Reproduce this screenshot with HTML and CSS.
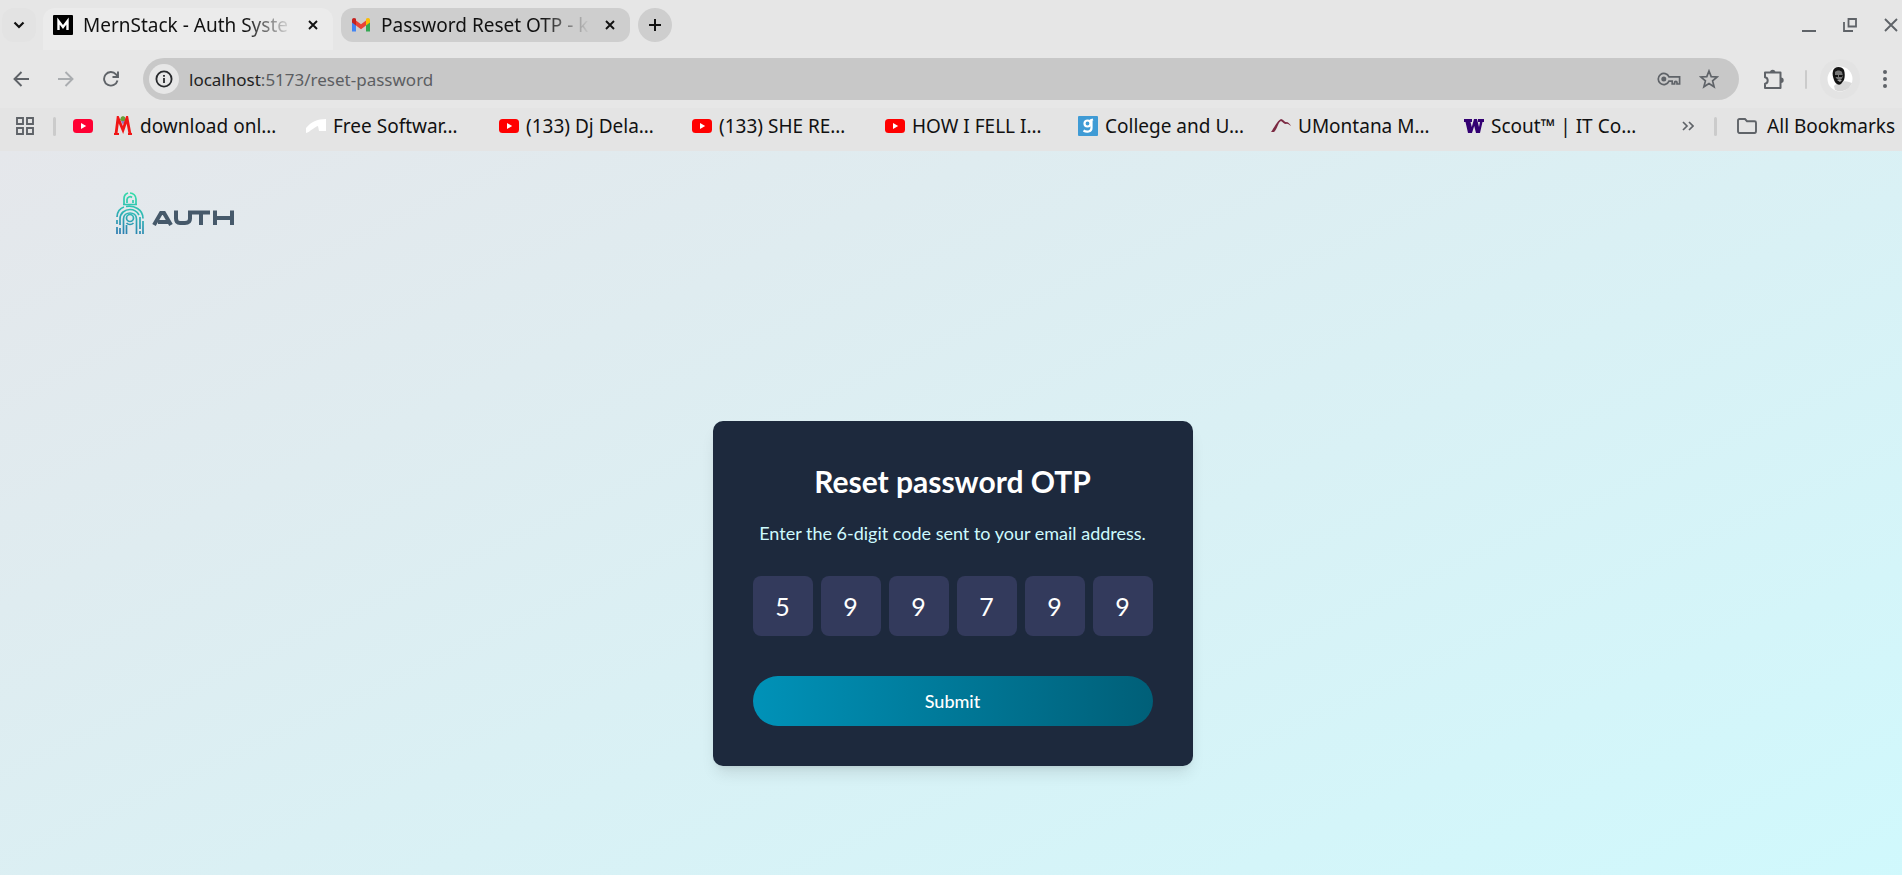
FILE: index.html
```html
<!DOCTYPE html>
<html lang="en">
<head>
<meta charset="utf-8">
<title>MernStack - Auth System</title>
<link rel="stylesheet" href="styles.css">
</head>
<body>
<header class="browser">
  <div class="tabstrip">
    <button class="tab-search" aria-label="Search tabs"><svg width="12" height="8" viewBox="0 0 12 8"><path d="M1.500 1.500 6 6l4.500-4.500" fill="none" stroke="#111" stroke-width="2.200"/></svg></button>
    <div class="tab tab-active">
      <svg width="20" height="20" viewBox="0 0 20 20"><rect width="20" height="20" rx="1" fill="#000"/><path d="M5.500 15V6l4.500 6 4.500-6v9" fill="none" stroke="#fff" stroke-width="2.400"/></svg>
      <span class="tab-title">MernStack - Auth Syste</span>
      <button class="tab-close" aria-label="Close tab"><svg width="10" height="10" viewBox="0 0 10 10"><path d="m1 1 8 8M9 1 1 9" stroke="#111" stroke-width="1.900"/></svg></button>
    </div>
    <div class="tab tab-idle">
      <svg width="20" height="20" viewBox="0 0 20 20"><path d="M1 5v11.500h4V8z" fill="#4285f4"/><path d="M19 5v11.500h-4V8z" fill="#34a853"/><path d="M15 5.500v5l4-3V5c0-2-2.200-2.600-4-1.200z" fill="#fbbc04"/><path d="M5 5.500v5l5 3.800 5-3.800v-5l-5 3.800z" fill="#ea4335"/><path d="M1 5c0-2 2.200-2.600 4-1.200v6.700l-4-3z" fill="#c5221f"/></svg>
      <span class="tab-title">Password Reset OTP - k</span>
      <button class="tab-close" aria-label="Close tab"><svg width="10" height="10" viewBox="0 0 10 10"><path d="m1 1 8 8M9 1 1 9" stroke="#111" stroke-width="1.900"/></svg></button>
    </div>
    <button class="new-tab" aria-label="New tab"><svg width="14" height="14" viewBox="0 0 14 14"><path d="M7 1v12M1 7h12" stroke="#111" stroke-width="2"/></svg></button>
    <div class="window-buttons">
      <button aria-label="Minimize"><svg width="14" height="14" viewBox="0 0 14 14"><path d="M0 13h14" stroke="#5f6368" stroke-width="2"/></svg></button>
      <button aria-label="Restore"><svg width="14" height="14" viewBox="0 0 14 14"><path d="M5.500 1H13v7.500H5.500zM1 4v9h9" fill="none" stroke="#5f6368" stroke-width="1.800"/></svg></button>
      <button aria-label="Close window"><svg width="14" height="14" viewBox="0 0 14 14"><path d="m1 1 12 12M13 1 1 13" stroke="#5f6368" stroke-width="1.900"/></svg></button>
    </div>
  </div>

  <div class="toolbar">
    <div class="nav">
      <button aria-label="Back"><svg width="16" height="16" viewBox="0 0 16 16"><path d="M16 8H1.500M8.500 1l-7 7 7 7" fill="none" stroke="#5f6368" stroke-width="1.900"/></svg></button>
      <button aria-label="Forward"><svg width="16" height="16" viewBox="0 0 16 16"><path d="M0 8h14.500M7.500 1l7 7-7 7" fill="none" stroke="#aaadb0" stroke-width="1.900"/></svg></button>
      <button aria-label="Reload"><svg width="16" height="16" viewBox="0 0 16 16"><path d="M14.500 9.500A6.800 6.800 0 1 1 13 3.300L14.500 5" fill="none" stroke="#5f6368" stroke-width="1.900"/><path d="M15 .5V6H9.500" fill="none" stroke="#5f6368" stroke-width="1.900"/></svg></button>
    </div>
    <div class="omnibox">
      <button class="site-info" aria-label="View site information"><svg width="18" height="18" viewBox="0 0 18 18"><circle cx="9" cy="9" r="7.600" fill="none" stroke="#27292c" stroke-width="1.800"/><path d="M9 8v5M9 5v1.800" stroke="#27292c" stroke-width="1.800"/></svg></button>
      <div class="url"><span class="host">localhost</span>:5173/reset-password</div>
      <button aria-label="Manage passwords"><svg width="24" height="14" viewBox="0 0 24 14"><path d="M12 4.800A5.600 5.600 0 1 0 12 9.200h3.200V12h2.400v-1.500c0-1.400 2.400-1.400 2.400 0V12h2.600V4.800z" fill="none" stroke="#5f6368" stroke-width="1.700"/><circle cx="6.800" cy="7" r="2.500" fill="#5f6368"/></svg></button>
      <button aria-label="Bookmark this tab"><svg width="20" height="20" viewBox="0 0 20 20"><path d="m10 2 2.200 5.600 6 .4-4.600 3.900 1.500 5.900L10 14.500l-5.100 3.300 1.500-5.900L1.800 8l6-.4z" fill="none" stroke="#5f6368" stroke-width="1.700"/></svg></button>
    </div>
    <div class="tools">
      <button aria-label="Extensions"><svg width="21" height="21" viewBox="0 0 21 21"><path d="M2 3.500h15.500V19H2v-4.200c3.600-.6 3.600-6 0-6.600z" fill="none" stroke="#5f6368" stroke-width="2" stroke-linejoin="round"/><path d="M7 3.500a2.700 2.700 0 0 1 5.400 0zM18 8.500a2.700 2.700 0 0 1 0 5.400z" fill="#5f6368"/></svg></button>
      <span class="rule rule-thin"></span>
      <button class="profile" aria-label="Profile"><svg width="26" height="26" viewBox="0 0 26 26"><circle cx="13" cy="13" r="12.500" fill="#fff"/><path d="M7 20c3-3 9-6 15-4l3 1a12.500 12.500 0 0 1-17 7z" fill="#d9d9d9"/><path d="M6 5c1-5 9-5 11-1 1 3 1 7 0 10l-3 4c-3 2-6-1-7-4S5 8 6 5z" fill="#151515"/><path d="M8 6c2-2 5-2 7 0l1 4c-1 3-2 4-3 4-3 0-4-2-5-4z" fill="#777"/><path d="M7 9h4v2H8zM12 9h4l-1 2h-3z" fill="#111"/><path d="M10 14h5l-2 2z" fill="#aaa"/></svg></button>
      <button aria-label="Menu"><svg width="4" height="18" viewBox="0 0 4 18"><g fill="#5f6368"><circle cx="2" cy="2" r="2"/><circle cx="2" cy="9" r="2"/><circle cx="2" cy="16" r="2"/></g></svg></button>
    </div>
  </div>

  <nav class="bookmarks" aria-label="Bookmarks">
    <button class="apps" aria-label="Apps"><svg width="18" height="18" viewBox="0 0 18 18"><path d="M1 1h6v6H1zM11 1h6v6h-6zM1 11h6v6H1zM11 11h6v6h-6z" fill="none" stroke="#5f6368" stroke-width="1.900"/></svg></button>
    <span class="rule"></span>
    <a class="bookmark bookmark-icon" href="#" aria-label="YouTube"><svg width="20" height="20" viewBox="0 0 20 20"><rect y="3" width="20" height="14" rx="3.500" fill="#f03"/><path d="M8 7v6l5.200-3z" fill="#fff"/></svg></a>
    <a class="bookmark" href="#"><svg width="20" height="20" viewBox="0 0 20 20"><path d="m8 1 2-1 2 1 1 3-3 2-3-2z" fill="#689f38"/><path d="M8 5h4l-2 4z" fill="#8e7cc3"/><path d="M3 18 5 2l5 12L14 2l3 16" fill="none" stroke="#f01616" stroke-width="2.800"/><path d="M1 18h5M15 18h4" stroke="#f01616" stroke-width="2"/></svg><span>download onl…</span></a>
    <a class="bookmark" href="#"><svg width="20" height="20" viewBox="0 0 20 20"><path d="M0 12C5 6 11 3 20 3v12h-7l-1-5C8 11 4 16 0 17z" fill="#fff"/></svg><span>Free Softwar…</span></a>
    <a class="bookmark" href="#"><svg width="20" height="20" viewBox="0 0 20 20"><rect y="3" width="20" height="14" rx="3.500" fill="red"/><path d="M8 7v6l5.200-3z" fill="#fff"/></svg><span>(133) Dj Dela…</span></a>
    <a class="bookmark" href="#"><svg width="20" height="20" viewBox="0 0 20 20"><rect y="3" width="20" height="14" rx="3.500" fill="red"/><path d="M8 7v6l5.200-3z" fill="#fff"/></svg><span>(133) SHE RE…</span></a>
    <a class="bookmark" href="#"><svg width="20" height="20" viewBox="0 0 20 20"><rect y="3" width="20" height="14" rx="3.500" fill="red"/><path d="M8 7v6l5.200-3z" fill="#fff"/></svg><span>HOW I FELL I…</span></a>
    <a class="bookmark" href="#"><svg width="20" height="20" viewBox="0 0 20 20"><rect width="20" height="20" rx="1" fill="#3f9bd5"/><circle cx="9.500" cy="7.500" r="3" fill="none" stroke="#fff" stroke-width="2.200"/><path d="M13.500 3v9c0 4-5 4.500-8 2.500M12 4.500l3-1" fill="none" stroke="#fff" stroke-width="2.200"/></svg><span>College and U…</span></a>
    <a class="bookmark" href="#"><svg width="20" height="20" viewBox="0 0 20 20"><path d="M0 16C3 12 6 5 10 3c2 0 4 4 6 3 2 1 3 2 4 4-2-1-3-3-5-2-2 0-3-2-5-3-3 1-4 9-7 11z" fill="#7b2942"/></svg><span>UMontana M…</span></a>
    <a class="bookmark" href="#"><svg width="20" height="20" viewBox="0 0 20 20"><path d="M0 3h8v3H6.500l1.300 5L10 3h3l2 8 1-5h-2V3h6v3h-1.500L16 17h-4l-1.800-7L8 17H4L1.500 6H0z" fill="#330072"/></svg><span>Scout™ | IT Co…</span></a>
    <div class="bookmarks-end">
      <button aria-label="More bookmarks"><svg width="12" height="10" viewBox="0 0 12 10"><path d="m1 1 4 4-4 4M7 1l4 4-4 4" fill="none" stroke="#5f6368" stroke-width="1.700"/></svg></button>
      <span class="rule"></span>
      <a class="all-bookmarks" href="#"><svg width="20" height="16" viewBox="0 0 20 16"><path d="M1 13V2.500Q1 1 2.500 1H8l2 2.200h7.500Q19 3.200 19 4.700V13q0 2-1.500 2h-15Q1 15 1 13z" fill="none" stroke="#5f6368" stroke-width="1.900"/></svg><span>All Bookmarks</span></a>
    </div>
  </nav>
</header>

<main class="page">
  <a class="logo" href="#" aria-label="Auth home">
    <svg width="120" height="44" viewBox="0 0 120 44">
      <defs><linearGradient id="mark" gradientUnits="userSpaceOnUse" x1="20" y1="0" x2="8" y2="44"><stop offset="0" stop-color="#35e0a8"/><stop offset=".5" stop-color="#2fb5b5"/><stop offset="1" stop-color="#2a78b0"/></linearGradient></defs>
      <g fill="none" stroke="url(#mark)" stroke-width="1.700">
        <path d="M8 12V7a6 6 0 0 1 4-6M14 1a6 6 0 0 1 6 6v5M11 11V7.500a3 3 0 0 1 5-2M17 8v3M7 12.500h14"/>
        <path d="M1 25c0-5 3-9 7-10M10 14.500c8-1.500 17 3 17 12M1 28v4M1 35v7M27 29v13"/>
        <path d="M4 33V27c0-6 5-9.500 10-9.500 4 0 7 2 9 5.500M24 25v12M4 36v6M24 39v3"/>
        <path d="M7.500 42V27c0-8 13-8 13 0v15M10.500 42V33"/>
        <circle cx="14" cy="26" r="3.500"/><path d="M10.500 31c2 2 5 2 7 0"/>
      </g>
      <g fill="none" stroke="#46596a" stroke-width="4">
        <path d="m38 33 7-12h3l7 12M42 30h10"/>
        <path d="M60 18.500v8q0 4.500 4 4.500h5q5 0 5-4.500v-8"/>
        <path d="M76 20.500h18M85 20v13M99 18.500V33M116 18.500V33M99 26h17"/>
      </g>
    </svg>
  </a>
  <form class="card">
    <h1>Reset password OTP</h1>
    <p>Enter the 6-digit code sent to your email address.</p>
    <div class="digits">
      <input aria-label="Digit 1" maxlength="1" value="5">
      <input aria-label="Digit 2" maxlength="1" value="9">
      <input aria-label="Digit 3" maxlength="1" value="9">
      <input aria-label="Digit 4" maxlength="1" value="7">
      <input aria-label="Digit 5" maxlength="1" value="9">
      <input aria-label="Digit 6" maxlength="1" value="9">
    </div>
    <button class="submit" type="button">Submit</button>
  </form>
</main>
</body>
</html>
```
FILE: styles.css
```css
* { box-sizing: border-box; }
body { margin: 0; min-height: 100vh; display: flex; flex-direction: column; font-family: "Noto Sans", sans-serif; color: #111; overflow: hidden; }
button { border: 0; padding: 0; background: none; font: inherit; color: inherit; display: flex; align-items: center; justify-content: center; flex: none; }
a { color: inherit; text-decoration: none; }
svg { display: block; flex: none; }

.browser { background: #e4e4e4; font-size: 19px; }
.tabstrip { display: flex; align-items: center; height: 50px; padding: 0 4px 0 2px; background: #e6e6e6; }
.tab-search { width: 34px; height: 34px; border-radius: 12px; background: #e3e3e3; }
.tab { display: flex; align-items: center; height: 34px; width: 289px; padding: 0 10px; gap: 10px; border-radius: 12px; }
.tab-active { margin-left: 7px; height: 42px; margin-top: 8px; padding-bottom: 8px; width: 290px; background: #ebebeb; border-radius: 12px 12px 0 0; }
.tab-idle { margin-left: 8px; background: #cecece; }
.tab-title { flex: 1; min-width: 0; white-space: nowrap; -webkit-mask-image: linear-gradient(to right, #000 calc(100% - 48px), transparent); mask-image: linear-gradient(to right, #000 calc(100% - 48px), transparent); }
.tab-close { width: 20px; height: 20px; }
.new-tab { width: 34px; height: 34px; margin-left: 8px; border-radius: 50%; background: #cecece; }
.window-buttons { display: flex; gap: 27px; margin-left: auto; }

.toolbar { display: flex; align-items: center; height: 58px; padding: 0 15px 0 13px; background: #e7e7e7; }
.nav { display: flex; gap: 29px; width: 130px; }
.omnibox { flex: 1; display: flex; align-items: center; height: 42px; padding: 0 20px 0 6px; gap: 18px; border-radius: 21px; background: #c8c8c8; }
.site-info { width: 30px; height: 30px; border-radius: 50%; background: #e7e7e7; }
.url { flex: 1; margin-left: -8px; font-size: 17px; color: #5c5e62; }
.host { color: #222; }
.tools { display: flex; align-items: center; margin-left: 24px; gap: 21px; }
.profile { width: 40px; height: 40px; margin: 0 2px 0 -8px; border-radius: 50%; background: #e3e3e3; }

.rule { width: 3px; height: 19px; border-radius: 2px; background: #cbcbcb; }
.rule-thin { width: 2px; }
.bookmarks { display: flex; align-items: center; height: 43px; padding: 0 7px 7px 16px; white-space: nowrap; }
.apps { margin-right: 19px; }
.bookmark { display: flex; align-items: center; gap: 7px; width: 193px; }
.bookmark-icon { width: 40px; margin-left: 17px; }
.bookmarks-end { display: flex; align-items: center; gap: 20px; margin-left: auto; }
.all-bookmarks { display: flex; align-items: center; gap: 10px; }

.page { flex: 1; display: flex; flex-direction: column; align-items: center; padding: 41px 0 109px 3px; font-family: Lato, sans-serif; background: linear-gradient(to bottom right, #e5e7eb, #cefafe) 0 0 / 100% 100vh; }
.logo { align-self: flex-start; margin-left: 113px; }
.card { width: 480px; max-width: 100%; margin-top: 185px; padding: 40px; border-radius: 10px; background: #1d293d; box-shadow: 0 10px 15px -3px rgb(0 0 0 / 10%), 0 4px 6px -4px rgb(0 0 0 / 10%); text-align: center; }
.card h1 { margin: 0 0 18px; font-size: 30px; line-height: 40px; font-weight: 700; color: #fff; }
.card p { margin: 0 0 28px; font-size: 18px; line-height: 29px; color: #cefafe; }
.digits { display: grid; grid-template-columns: repeat(6, 1fr); gap: 8px; margin-bottom: 40px; }
.digits input { width: 100%; height: 60px; padding: 0; border: 0; border-radius: 8px; background: #333a5c; color: #fff; font: 25px Lato, sans-serif; text-align: center; }
.submit { width: 100%; height: 50px; border-radius: 25px; background: linear-gradient(to right, #0092b8, #005f78); color: #fff; font-size: 18px; font-weight: 500; }
```
